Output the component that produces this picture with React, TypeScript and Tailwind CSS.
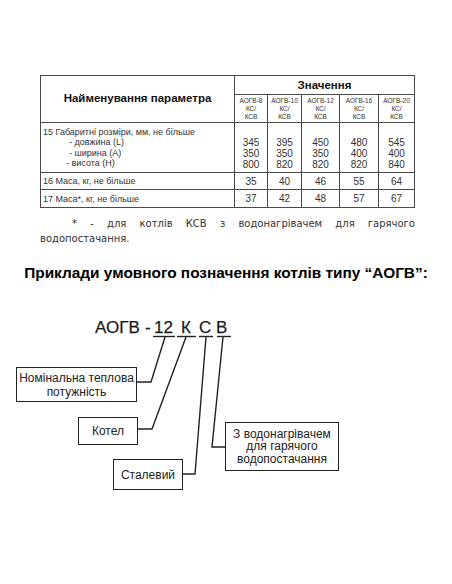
const SANS = '"Liberation Sans", Arial, sans-serif';
const WIDE = '"DejaVu Sans", Verdana, sans-serif';

const models = ['АОГВ-8', 'АОГВ-10', 'АОГВ-12', 'АОГВ-16', 'АОГВ-20'];
const colWidths = [33, 34, 38, 39, 36];
const sizes = [
  ['345', '350', '800'],
  ['395', '350', '820'],
  ['450', '350', '820'],
  ['480', '400', '820'],
  ['545', '400', '840'],
];
const mass = ['35', '40', '46', '55', '64'];
const massKsv = ['37', '42', '48', '57', '67'];

const cell = 'border border-[#4a4a4a] p-0';

function ParamTable() {
  return (
    <table
      className="ml-[40px] table-fixed border-collapse text-[#333]"
      style={{ width: 374 }}
    >
      <colgroup>
        <col style={{ width: 194 }} />
        {colWidths.map((w, i) => (
          <col key={i} style={{ width: w }} />
        ))}
      </colgroup>
      <thead>
        <tr className="h-[19px]">
          <th
            rowSpan={2}
            className={`${cell} text-center align-middle text-[11.5px] font-bold text-[#111]`}
          >
            Найменування параметра
          </th>
          <th
            colSpan={5}
            className={`${cell} text-center align-middle text-[11.5px] font-bold leading-[17px] text-[#111]`}
          >
            Значення
          </th>
        </tr>
        <tr className="h-[28px]">
          {models.map((m) => (
            <th
              key={m}
              className={`${cell} text-center align-middle text-[6.5px] font-normal leading-[8px]`}
            >
              <div>{m}</div>
              <div>КС/</div>
              <div>КСВ</div>
            </th>
          ))}
        </tr>
      </thead>
      <tbody className="text-[9px]">
        <tr className="h-[50px]">
          <td className={`${cell} align-top pl-[2px] pt-[4px] leading-[10.4px]`}>
            <div>15 Габаритні розміри, мм, не більше</div>
            <div className="pl-[26px]">- довжина (L)</div>
            <div className="pl-[26px]">- ширина (А)</div>
            <div className="pl-[23px]">- висота (Н)</div>
          </td>
          {sizes.map((s, i) => (
            <td
              key={i}
              className={`${cell} align-top pt-[14px] text-center text-[10px] leading-[11px]`}
            >
              {s.map((v, j) => (
                <div key={j}>{v}</div>
              ))}
            </td>
          ))}
        </tr>
        <tr className="h-[17px]">
          <td className={`${cell} align-middle pl-[2px] leading-[15px]`}>
            16 Маса, кг, не більше
          </td>
          {mass.map((v, i) => (
            <td key={i} className={`${cell} text-center align-middle text-[10px]`}>
              {v}
            </td>
          ))}
        </tr>
        <tr className="h-[18px]">
          <td className={`${cell} align-middle pl-[2px] leading-[16px]`}>
            17 Маса*, кг, не більше
          </td>
          {massKsv.map((v, i) => (
            <td key={i} className={`${cell} text-center align-middle text-[10px]`}>
              {v}
            </td>
          ))}
        </tr>
      </tbody>
    </table>
  );
}

function Box({
  left,
  top,
  width,
  height,
  children,
  className = '',
}: {
  left: number;
  top: number;
  width: number;
  height: number;
  children: React.ReactNode;
  className?: string;
}) {
  return (
    <div
      className={`absolute flex flex-col items-center justify-center border-[1.5px] border-[#222] bg-white text-center text-[12px] text-[#222] ${className}`}
      style={{ left, top, width, height }}
    >
      {children}
    </div>
  );
}

function Diagram() {
  const code = [
    { t: 'АОГВ', x: 95 },
    { t: '-', x: 145 },
    { t: '12', x: 154 },
    { t: 'К', x: 181 },
    { t: 'С', x: 199 },
    { t: 'В', x: 216 },
  ];
  return (
    <div className="relative mt-[17px] h-[284px] w-[452px]">
      {code.map((c) => (
        <span
          key={c.t}
          className="absolute top-[20px] text-[17px] leading-none text-[#1a1a1a] [-webkit-text-stroke:0.25px_#1a1a1a]"
          style={{ left: c.x }}
        >
          {c.t}
        </span>
      ))}

      <svg
        className="absolute inset-0"
        width="452"
        height="284"
        fill="none"
        stroke="#222"
        strokeWidth="1.4"
      >
        {/* underlines */}
        <line x1="153" y1="37.5" x2="175" y2="37.5" />
        <line x1="177" y1="37.5" x2="196" y2="37.5" />
        <line x1="199" y1="37.5" x2="213" y2="37.5" />
        <line x1="217" y1="37.5" x2="231" y2="37.5" />
        {/* leaders */}
        <polyline points="165,38 151,83 137,83" />
        <polyline points="186,38 152,130 138,130" />
        <polyline points="206,38 195,175 183,175" />
        <polyline points="223,38 212,148 225,148" />
      </svg>

      <Box left={16} top={68} width={121} height={35} className="leading-[14px]">
        <div>Номінальна теплова</div>
        <div>потужність</div>
      </Box>
      <Box left={78} top={118} width={60} height={28}>
        Котел
      </Box>
      <Box left={113} top={160} width={70} height={31}>
        Сталевий
      </Box>
      <Box
        left={225}
        top={123}
        width={114}
        height={49}
        className="text-[11px] leading-[12.5px]"
      >
        <div>З водонагрівачем</div>
        <div>для гарячого</div>
        <div>водопостачання</div>
      </Box>
    </div>
  );
}

export default function App() {
  return (
    <div className="h-[584px] w-[452px] overflow-hidden bg-white pt-[75px]" style={{ fontFamily: SANS }}>
      <ParamTable />

      <p
        className="ml-[40px] mt-[8px] w-[375px] text-justify indent-[32px] text-[10px] leading-[15px] text-[#333]"
        style={{ fontFamily: WIDE }}
      >
        * - для котлів КСВ з водонагрівачем для гарячого водопостачання.
      </p>

      <h2 className="mt-[18px] text-center text-[15.4px] font-bold leading-[18px] text-black">
        Приклади умовного позначення котлів типу “АОГВ”:
      </h2>

      <Diagram />
    </div>
  );
}
